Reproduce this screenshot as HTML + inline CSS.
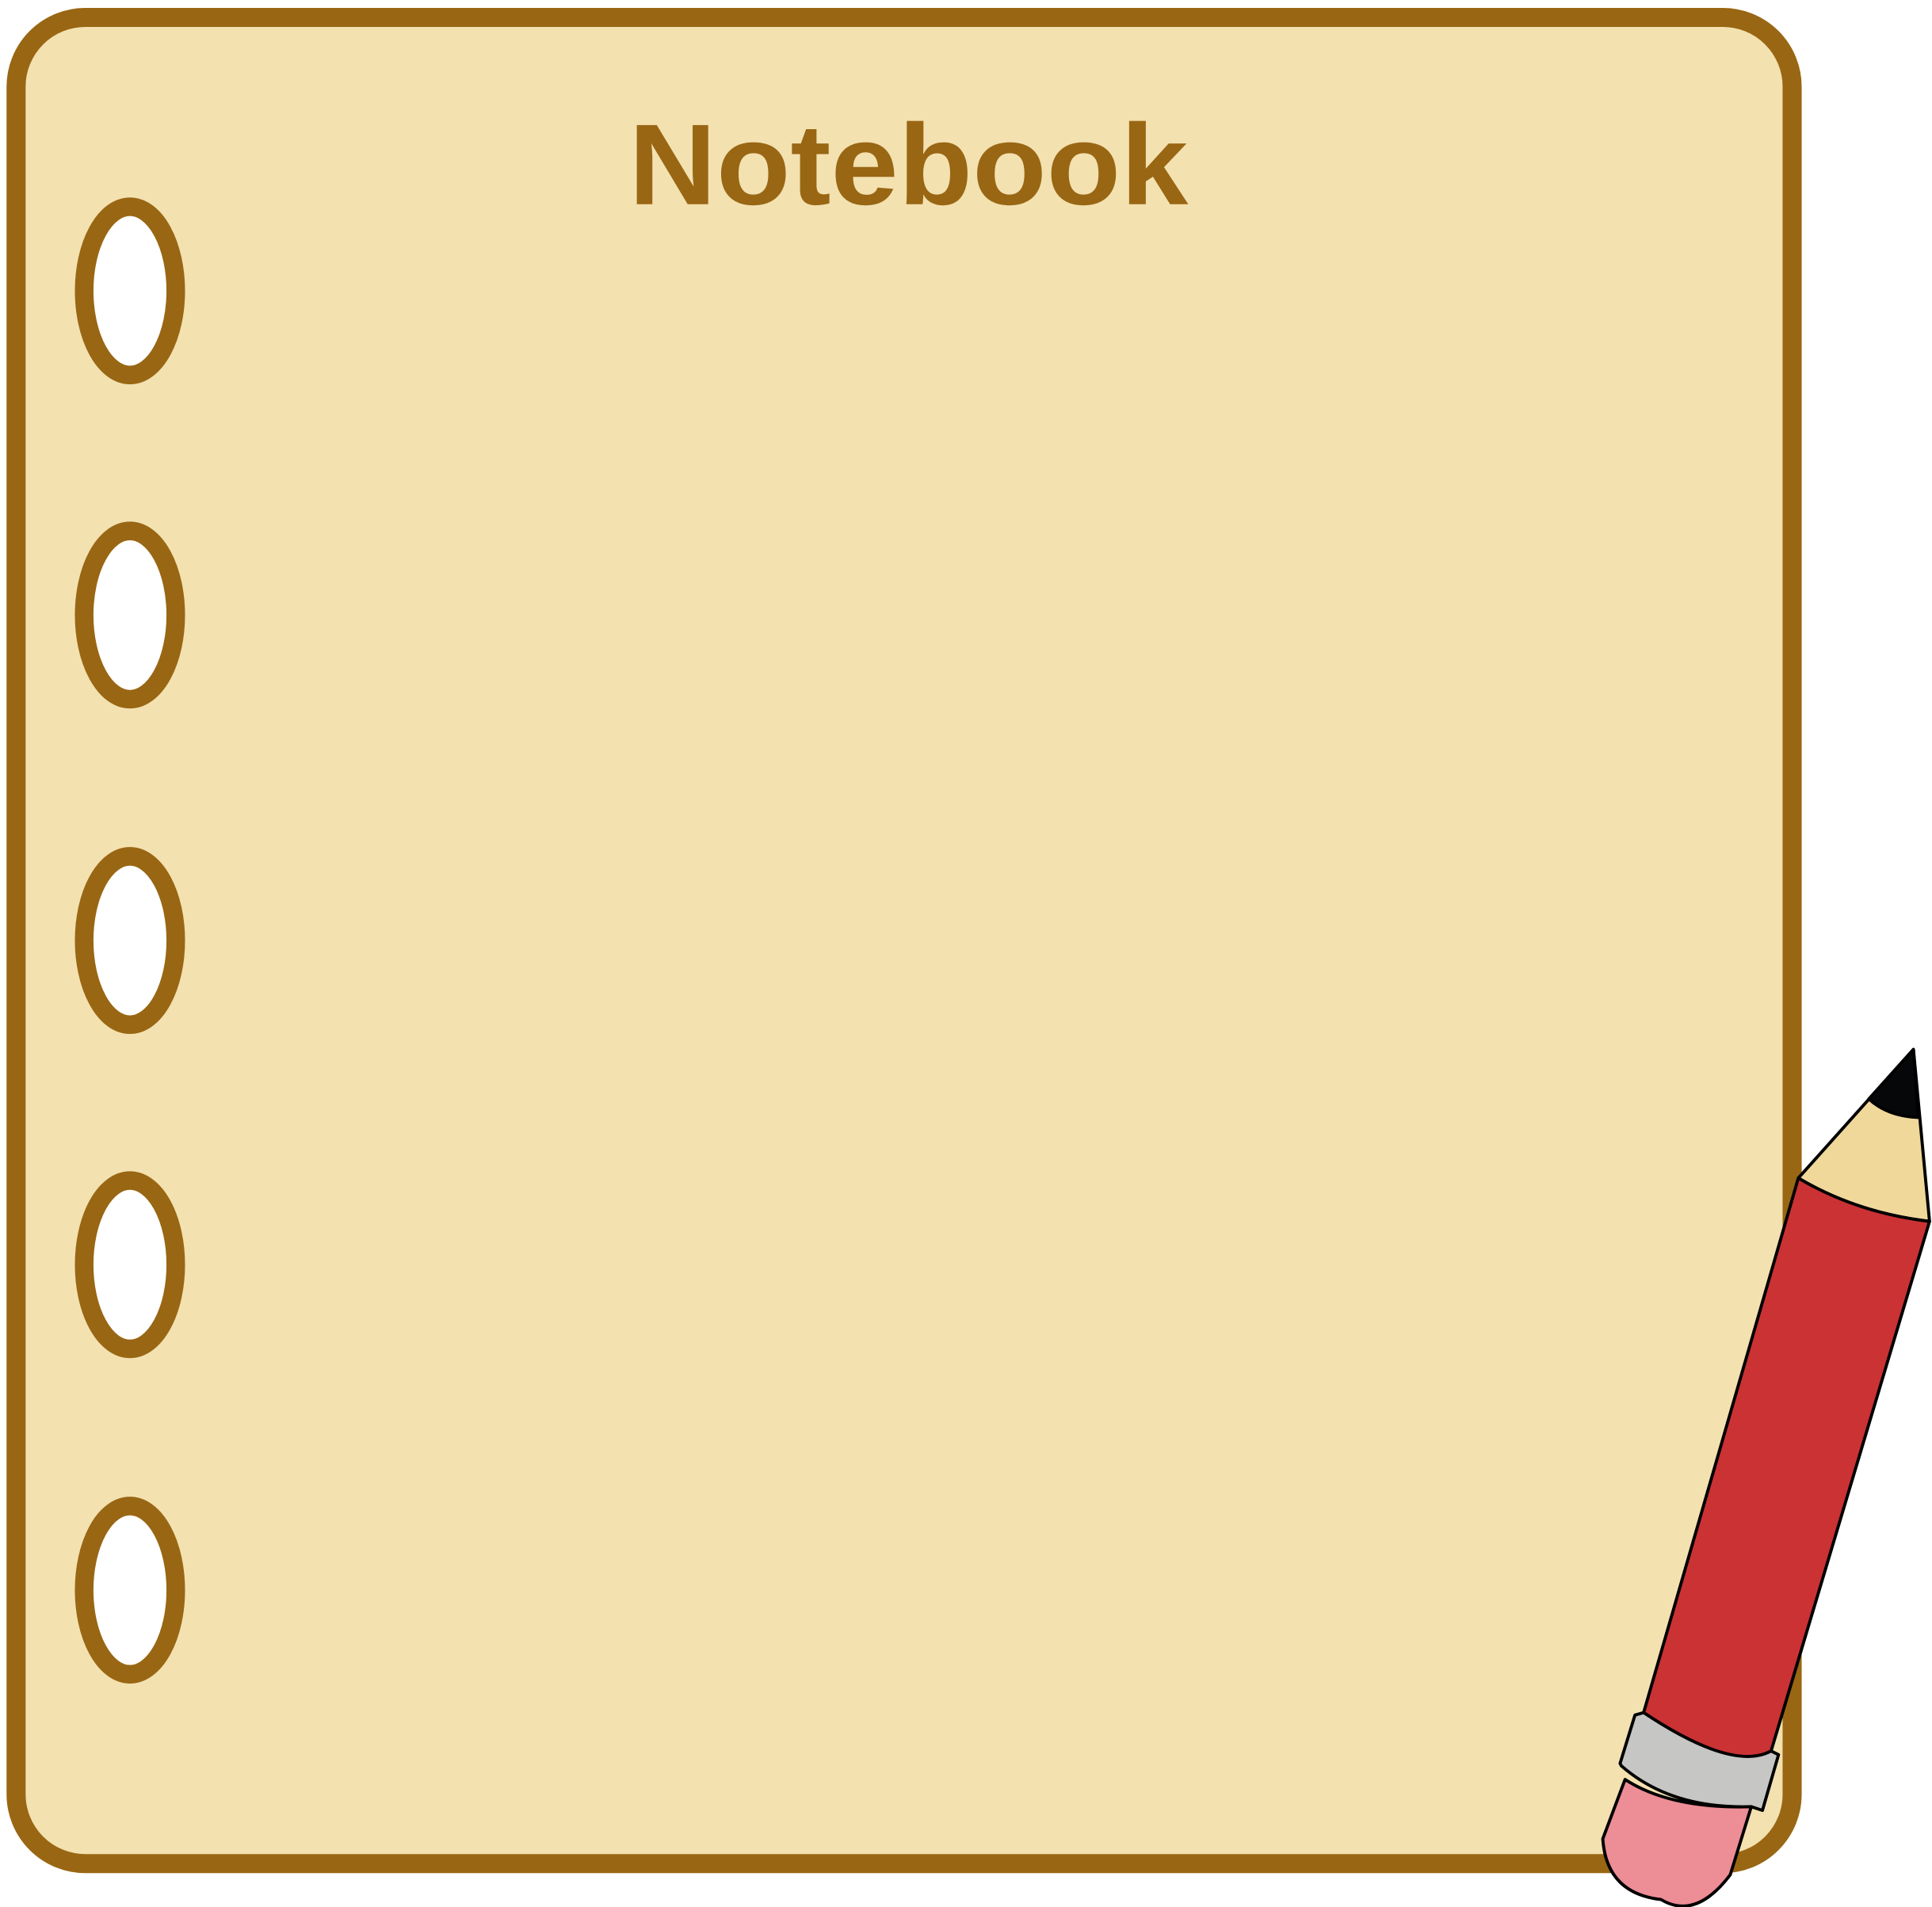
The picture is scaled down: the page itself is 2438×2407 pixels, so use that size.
<!DOCTYPE html>
<html><head><meta charset="utf-8"><style>html,body{margin:0;padding:0;background:#fff}svg{display:block}</style></head>
<body>
<svg width="2438" height="2407" viewBox="0 0 1561 1541" xmlns="http://www.w3.org/2000/svg">
<rect x="13" y="14" width="1435" height="1492" rx="56" fill="#f3e1b0" stroke="#996613" stroke-width="15.4"/>
<g fill="#fff" stroke="#996613" stroke-width="15">
<ellipse cx="105" cy="235" rx="37" ry="68"/>
<ellipse cx="105" cy="497" rx="37" ry="68"/>
<ellipse cx="105" cy="760" rx="37" ry="68"/>
<ellipse cx="105" cy="1022" rx="37" ry="68"/>
<ellipse cx="105" cy="1285" rx="37" ry="68"/>
</g>
<text x="734" y="165" text-anchor="middle" font-family="Liberation Sans, sans-serif" font-weight="bold" font-size="93" fill="#996613" textLength="452" lengthAdjust="spacingAndGlyphs">Notebook</text>
<g stroke="#000" stroke-width="2.5" stroke-linejoin="round">
<path d="M1453,952 L1546,848 L1559,987 Q1500,980 1453,952 Z" fill="#f0d89a"/>
<path d="M1510,888 L1546,848 L1550,903 Q1525,902 1510,888 Z" fill="#060709"/>
<path d="M1453,952 Q1500,980 1559,987 L1431,1415 Q1400,1432 1328,1384 Z" fill="#cb3234"/>
<path d="M1313,1438 Q1350,1462 1415,1460 L1398,1515 Q1370,1552 1342,1535 Q1298,1530 1295,1486 L1313,1438 Z" fill="#ed8d96"/>
<path d="M1321,1386 L1328,1384 Q1400,1432 1431,1415 L1437,1418 L1424,1463 L1415,1460 Q1350,1462 1310,1427 L1309,1425 Z" fill="#c6c6c4"/>
</g>
</svg>
</body></html>
